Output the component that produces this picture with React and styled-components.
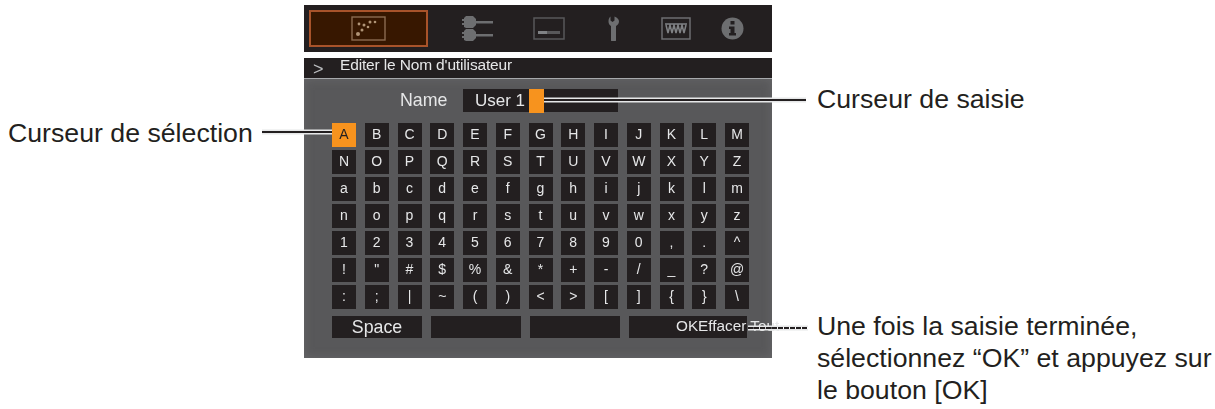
import React from "react";
import styled, { createGlobalStyle } from "styled-components";

const KEY_ROWS = [
  "ABCDEFGHIJKLM",
  "NOPQRSTUVWXYZ",
  "abcdefghijklm",
  "nopqrstuvwxyz",
  "1234567890,.^",
  "!\"#$%&*+-/_?@",
  ":;|~()<>[]{}\\",
];

const App = () => {
  return (
    <Page>
      <GlobalStyle />
      <LeftNotes>
        <Note>Curseur de sélection</Note>
      </LeftNotes>
      <Panel>
        <TabBar>
          <ActiveTab>
            <svg width="36" height="26" viewBox="0 0 36 26">
              <rect x="1" y="1" width="33" height="23" fill="none" stroke="#8a6c50" strokeWidth="1.4" />
              <g fill="#b09476">
                <circle cx="7" cy="18" r="2" />
                <circle cx="11" cy="14" r="1.500" />
                <circle cx="8" cy="8" r="1.400" />
                <circle cx="13" cy="9" r="1.500" />
                <circle cx="17" cy="11" r="1.300" />
                <circle cx="19" cy="6" r="1.500" />
                <circle cx="24" cy="6" r="1.300" />
              </g>
            </svg>
          </ActiveTab>
          <Tab>
            <svg width="34" height="28" viewBox="0 0 34 28">
              <path d="M5 1h7l3 3v6l-3 3H5l-2-1V3z" fill="#6d6e70" />
              <path d="M5 14h7l3 3v6l-3 3H5l-2-1V16z" fill="#6d6e70" />
              <rect x="1" y="4" width="3" height="2" fill="#6d6e70" />
              <rect x="1" y="8" width="3" height="2" fill="#6d6e70" />
              <rect x="1" y="17" width="3" height="2" fill="#6d6e70" />
              <rect x="1" y="21" width="3" height="2" fill="#6d6e70" />
              <rect x="14" y="6" width="18" height="2.500" fill="#6d6e70" />
              <rect x="14" y="19" width="18" height="2.500" fill="#6d6e70" />
            </svg>
          </Tab>
          <Tab>
            <svg width="32" height="23" viewBox="0 0 32 23">
              <rect x="1" y="1" width="30" height="21" fill="none" stroke="#58585a" strokeWidth="1.500" />
              <rect x="5" y="14" width="22" height="3" fill="#58585a" />
              <rect x="5" y="14" width="9" height="3" fill="#808285" />
            </svg>
          </Tab>
          <Tab>
            <svg width="12" height="25" viewBox="0 0 12 25">
              <path
                d="M2.500 0.500v4l2 1.500 2-1.500v-4c3 1 4.500 3 4.500 5 0 2.500-1.500 3.500-3 4.500V24a2.500 2 0 0 1-5 0V10C1.500 9 0.500 7.500 0.500 5.500c0-2 .5-4 2-5z"
                fill="#6d6e70"
              />
            </svg>
          </Tab>
          <Tab>
            <svg width="30" height="23" viewBox="0 0 30 23">
              <rect x="1" y="1" width="28" height="21" fill="none" stroke="#6d6e70" strokeWidth="1.500" />
              <path
                d="M4 7h22M5 8l2 8 2-8 2 8 2-8 2 8 2-8 2 8 2-8 2 8 2-8"
                fill="none"
                stroke="#808285"
                strokeWidth="1.500"
              />
            </svg>
          </Tab>
          <Tab>
            <svg width="23" height="23" viewBox="0 0 23 23">
              <circle cx="11.500" cy="11.500" r="11" fill="#6d6e70" />
              <rect x="9.500" y="4" width="4" height="3.500" fill="#231f20" />
              <path d="M8 9.500h5.500V16H15v2.500H8V16h1.500v-4H8z" fill="#231f20" />
            </svg>
          </Tab>
        </TabBar>
        <TitleBar>
          <Chevron>&gt;</Chevron>
          <Title>Editer le Nom d'utilisateur</Title>
        </TitleBar>
        <Body>
          <NameRow>
            <NameLabel>Name</NameLabel>
            <NameField>
              User 1
              <InputCursor />
            </NameField>
          </NameRow>
          <KeyGrid>
            {KEY_ROWS.map((row, r) =>
              [...row].map((ch, c) => (
                <Key key={`${r}-${c}`} $selected={r === 0 && c === 0}>
                  {ch}
                </Key>
              ))
            )}
          </KeyGrid>
          <ActionRow>
            <ActionKey $w={90}>Space</ActionKey>
            <ActionKey $w={90} />
            <ActionKey $w={90} />
            <OkKey>OKEffacer Tout</OkKey>
          </ActionRow>
        </Body>
      </Panel>
      <RightNotes>
        <Note>Curseur de saisie</Note>
        <Note>
          Une fois la saisie terminée,
          <br />
          sélectionnez “OK” et appuyez sur
          <br />
          le bouton [OK]
        </Note>
      </RightNotes>
      <Leader $left={262} $top={131} $w={70} />
      <Leader $left={544} $top={99} $w={262} />
      <Leader $left={748} $top={327} $w={60} $dashed />
    </Page>
  );
};

export default App;

const GlobalStyle = createGlobalStyle`
  html, body {
    margin: 0;
    background: #fff;
    overflow: hidden;
  }
  body {
    font-family: "Liberation Sans", Arial, sans-serif;
  }
`;

const Page = styled.div`
  position: relative;
  display: flex;
  width: 1215px;
  height: 409px;
  padding-top: 5px;
  box-sizing: border-box;
`;

const LeftNotes = styled.div`
  width: 304px;
  padding: 112px 0 0 8px;
  box-sizing: border-box;
`;

const RightNotes = styled.div`
  display: flex;
  flex-direction: column;
  gap: 195px;
  padding: 78px 0 0 45px;
`;

const Note = styled.div`
  font-size: 26.700px;
  line-height: 32px;
  color: #231f20;
  white-space: nowrap;
`;

const Panel = styled.div`
  display: flex;
  flex-direction: column;
  width: 468px;
  height: 353px;
  filter: blur(0.5px);
`;

const TabBar = styled.div`
  display: grid;
  grid-template-columns: 119px 100px 42px 88px 36px 76px;
  height: 47px;
  padding: 5px;
  box-sizing: border-box;
  background: #231f20;
`;

const Tab = styled.div`
  display: flex;
  align-items: center;
  justify-content: center;
`;

const ActiveTab = styled(Tab)`
  background: #371700;
  border: 2px solid #a8532a;
  box-sizing: border-box;
`;

const TitleBar = styled.div`
  display: flex;
  align-items: center;
  height: 21px;
  margin-top: 6px;
  box-sizing: border-box;
  border-bottom: 1px solid #a7a9ac;
  background: #231f20;
  color: #e6e7e8;
`;

const Chevron = styled.span`
  width: 36px;
  padding-left: 9px;
  box-sizing: border-box;
  font-size: 18px;
  line-height: 18px;
  margin-top: 2px;
  color: #bcbec0;
`;

const Title = styled.span`
  font-size: 15.500px;
  letter-spacing: -0.150px;
  margin-bottom: 6px;
`;

const Body = styled.div`
  flex: 1;
  padding: 10px 0 0 28px;
  background: #58585a;
  box-shadow: inset 0 0 10px #676769;
`;

const NameRow = styled.div`
  display: flex;
  align-items: center;
  height: 23px;
  padding-left: 68px;
  color: #e6e7e8;
  font-size: 17.800px;
`;

const NameLabel = styled.span`
  width: 63px;
`;

const NameField = styled.div`
  display: flex;
  align-items: center;
  width: 155px;
  height: 23px;
  padding-left: 12px;
  box-sizing: border-box;
  background: #231f20;
  font-size: 17px;
`;

const InputCursor = styled.span`
  width: 15px;
  height: 24px;
  margin-left: 4px;
  background: #f7931e;
`;

const KeyGrid = styled.div`
  display: grid;
  grid-template-columns: repeat(13, 24px);
  grid-auto-rows: 24px;
  column-gap: 8.750px;
  row-gap: 3px;
  margin-top: 11px;
`;

const Key = styled.div`
  display: flex;
  align-items: flex-start;
  justify-content: center;
  padding-top: 4px;
  box-sizing: border-box;
  font-size: 14px;
  line-height: 14px;
  background: ${(p) => (p.$selected ? "#f7931e" : "#231f20")};
  color: ${(p) => (p.$selected ? "#231f20" : "#e6e7e8")};
`;

const ActionRow = styled.div`
  display: flex;
  gap: 9px;
  margin-top: 7px;
`;

const ActionKey = styled.div`
  display: flex;
  align-items: center;
  justify-content: center;
  width: ${(p) => p.$w}px;
  height: 22px;
  background: #231f20;
  color: #e6e7e8;
  font-size: 17.800px;
`;

const OkKey = styled.div`
  width: 118px;
  height: 22px;
  padding-left: 47px;
  box-sizing: border-box;
  background: #231f20;
  color: #e6e7e8;
  font-size: 15.300px;
  line-height: 20px;
  white-space: nowrap;
`;

const Leader = styled.div`
  position: absolute;
  left: ${(p) => p.$left}px;
  top: ${(p) => p.$top}px;
  width: ${(p) => p.$w}px;
  height: 2px;
  background: ${(p) =>
    p.$dashed
      ? "repeating-linear-gradient(90deg, #231f20 0 5px, transparent 5px 6px)"
      : "#231f20"};
  box-shadow: 0 -1.500px 0 #e6e7e8, 0 1.500px 0 #e6e7e8;
`;
